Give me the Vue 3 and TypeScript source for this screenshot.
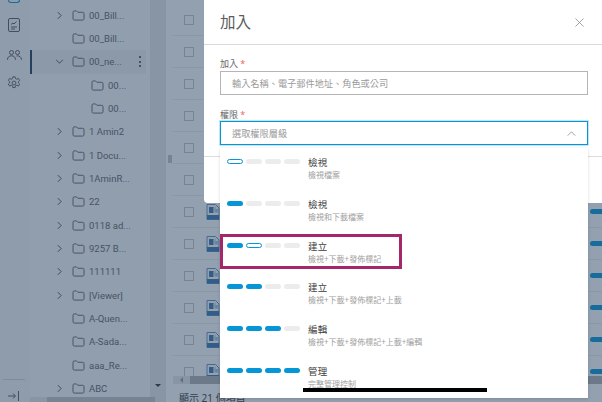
<script setup lang="ts">
interface TreeRow { label: string; caret?: 'right' | 'down'; child?: boolean; selected?: boolean }
const treeRows: TreeRow[] = [
  { label: '00_Bill...', caret: 'right' },
  { label: '00_Bill...' },
  { label: '00_ne...', caret: 'down', selected: true },
  { label: '00...', child: true },
  { label: '00...', child: true },
  { label: '1 Amin2', caret: 'right' },
  { label: '1 Docu...', caret: 'right' },
  { label: '1AminR...', caret: 'right' },
  { label: '22', caret: 'right' },
  { label: '0118 ad...', caret: 'right' },
  { label: '9257 B...', caret: 'right' },
  { label: '111111', caret: 'right' },
  { label: '[Viewer]', caret: 'right' },
  { label: 'A-Quen...' },
  { label: 'A-Sada...' },
  { label: 'aaa_Re...' },
  { label: 'ABC', caret: 'right' }
]
const tableRows = Array.from({ length: 12 }, (_, i) => i)
interface Level { title: string; desc: string; pills: string[] }
const levels: Level[] = [
  { title: '檢視', desc: '檢視檔案', pills: ['half', 'off', 'off', 'off'] },
  { title: '檢視', desc: '檢視和下載檔案', pills: ['on', 'off', 'off', 'off'] },
  { title: '建立', desc: '檢視+下載+發佈標記', pills: ['on', 'half', 'off', 'off'] },
  { title: '建立', desc: '檢視+下載+發佈標記+上載', pills: ['on', 'on', 'off', 'off'] },
  { title: '編輯', desc: '檢視+下載+發佈標記+上載+編輯', pills: ['on', 'on', 'on', 'off'] },
  { title: '管理', desc: '完整管理控制', pills: ['on', 'on', 'on', 'on'] }
]
</script>

<template>
  <div class="page">
    <div class="base">
      <aside class="rail">
        <div class="rail-top"></div>
        <svg class="rail-icon doc" viewBox="0 0 12 14" width="12" height="14" fill="none" stroke="#5c5c5c" stroke-width="1">
          <rect x=".5" y=".5" width="11" height="13" rx="1.500" />
          <path d="M3 6.500 5 5l1 1 2.500-2.500M3 9h6M3 11h4" />
        </svg>
        <svg class="rail-icon people" viewBox="0 0 15 10" width="15" height="10" fill="none" stroke="#5c5c5c" stroke-width="1">
          <circle cx="4.500" cy="2.500" r="2" />
          <circle cx="10.500" cy="2.500" r="2" />
          <path d="M.5 9.800c0-2.800 1.700-4 4-4s4 1.200 4 4M9.600 5.900c2.600-.3 4.900.9 4.900 3.900" />
        </svg>
        <svg class="rail-icon gear" viewBox="0 0 16 16" width="14" height="14" fill="none" stroke="#5c5c5c" stroke-width="1.100">
          <circle cx="8" cy="8" r="2.200" />
          <path d="M6.700 1h2.600l.4 2 1.500.7 1.800-1 1.500 2.300-1.500 1.300v1.600l1.500 1.300-1.500 2.300-1.800-1-1.500.7-.4 2H6.700l-.4-2-1.500-.7-1.800 1-1.500-2.300 1.500-1.300V6.300L1.500 5l1.500-2.300 1.800 1 1.500-.7z" />
        </svg>
        <div class="rail-foot">
          <svg viewBox="0 0 12 10" width="12" height="10" fill="none" stroke="#5c5c5c" stroke-width="1">
            <path d="M0 5h7M5 2.500 7.500 5 5 7.500M10.500 0v10" />
          </svg>
        </div>
      </aside>

      <section class="tree">
        <div class="tree-main">
          <div class="tree-list">
            <div v-for="(row, i) in treeRows" :key="i" class="tree-row" :class="{ child: row.child, selected: row.selected }">
              <span class="caret">
                <svg v-if="row.caret === 'right'" viewBox="0 0 6 10" width="5" height="9" fill="none" stroke="#444" stroke-width="1.100"><path d="m1 1 4 4-4 4" /></svg>
                <svg v-else-if="row.caret === 'down'" viewBox="0 0 10 6" width="9" height="5" fill="none" stroke="#444" stroke-width="1.100"><path d="m1 1 4 4 4-4" /></svg>
              </span>
              <svg class="folder" viewBox="0 0 14 12" width="13" height="11" fill="none" stroke="#5c5c5c" stroke-width="1">
                <path d="M1 2.500A1.500 1.500 0 0 1 2.500 1h2.300l1.500 1.500h5.200A1.500 1.500 0 0 1 13 4v5.500a1.500 1.500 0 0 1-1.500 1.500h-9A1.500 1.500 0 0 1 1 9.500z" />
              </svg>
              <span class="tree-label">{{ row.label }}</span>
              <span v-if="row.selected" class="kebab"><i></i><i></i><i></i></span>
            </div>
          </div>
          <div class="tree-vscroll"><span class="arrow-down"></span></div>
        </div>
        <div class="tree-hscroll"><span class="thumb"></span></div>
      </section>

      <div class="splitter"><span class="grip"></span></div>

      <section class="table">
        <div class="rows">
          <div v-for="r in tableRows" :key="r" class="t-row">
            <span class="check"></span>
            <svg class="file" viewBox="0 0 14 16" width="14" height="16">
              <path d="M1 .5h8.500L13 4v11.500H1z" fill="#fff" stroke="#3f79ad" stroke-width=".8" />
              <rect x="1" y="11" width="12" height="4.500" fill="#3f79ad" />
              <rect x="3" y="3" width="4.500" height="6" fill="#3f79ad" />
              <path d="M8.500 2.500h1V5H12v3.500H8.500z" fill="#a9c5e0" />
            </svg>
            <span class="row-pill"></span>
          </div>
        </div>
        <div class="t-scroll"><span class="t-arrow"></span><span class="t-thumb"></span></div>
        <div class="t-foot">顯示 21 個項目</div>
      </section>
    </div>

    <div class="scrim"></div>

    <div class="modal">
      <header class="modal-head">
        <h1>加入</h1>
        <svg viewBox="0 0 10 10" width="9" height="9" fill="none" stroke="#808080" stroke-width=".8"><path d="m.5.500 9 9M9.500.500l-9 9" /></svg>
      </header>
      <div class="modal-body">
        <label class="lbl">加入 <em>*</em></label>
        <div class="input">輸入名稱、電子郵件地址、角色或公司</div>
        <label class="lbl second">權限 <em>*</em></label>
        <div class="input select">
          <span>選取權限層級</span>
          <svg viewBox="0 0 10 6" width="9" height="5" fill="none" stroke="#808080" stroke-width=".9"><path d="m.5 5.500 4.500-4.500 4.500 4.500" /></svg>
        </div>
      </div>
      <div class="modal-rule"></div>
    </div>

    <div class="menu">
      <div v-for="(lv, i) in levels" :key="i" class="level">
        <div class="pills">
          <span v-for="(p, j) in lv.pills" :key="j" class="pill" :class="p"></span>
        </div>
        <div class="level-text">
          <div class="level-title">{{ lv.title }}</div>
          <div class="level-desc">{{ lv.desc }}</div>
        </div>
      </div>
    </div>

    <div class="highlight"></div>
    <div class="redact"></div>
  </div>
</template>

<style scoped>
.page {
  position: relative;
  width: 602px;
  height: 402px;
  overflow: hidden;
  background: #fff;
  font-family: "Noto Sans", "Noto Sans CJK TC", sans-serif;
}
.base { display: flex; width: 100%; height: 100%; }
.rail {
  width: 30px;
  flex: none;
  display: flex;
  flex-direction: column;
  align-items: center;
  background: #f6f6f6;
  padding-right: 2px;
  box-sizing: border-box;
}
.rail-top { width: 10px; height: 2px; border: 1px solid #0696d7; border-top: 0; border-radius: 0 0 3px 3px; align-self: flex-start; margin-left: 8px; }
.rail-icon { flex: none; }
.doc { margin-top: 15px; }
.people { margin-top: 18px; }
.gear { margin-top: 16px; }
.rail-foot {
  margin-top: auto;
  width: 22px;
  height: 23px;
  border-top: 1px solid #d4d4d4;
  display: flex;
  justify-content: center;
  padding-top: 11px;
  box-sizing: border-box;
}
.tree { width: 136px; flex: none; display: flex; flex-direction: column; background: #fafafa; }
.tree-main { flex: 1; min-height: 0; display: flex; }
.tree-list { width: 120px; flex: none; padding-top: 3.500px; overflow: hidden; box-sizing: border-box; }
.tree-row {
  position: relative;
  height: 23.350px;
  display: flex;
  align-items: center;
  padding-left: 22px;
  color: #666;
  font-family: Roboto, "Noto Sans CJK TC", sans-serif;
  font-size: 9.500px;
  white-space: nowrap;
  box-sizing: border-box;
}
.tree-row.child { padding-left: 41px; }
.tree-row.selected { background: #f0f0f0; width: 115px; margin-left: 1px; padding-left: 21px; }
.tree-row.selected::before {
  content: "";
  position: absolute;
  left: -1px;
  top: 0;
  bottom: 0;
  width: 1.500px;
  background: #243c5a;
}
.caret { width: 15px; flex: none; display: flex; justify-content: center; align-items: center; }
.folder { flex: none; margin-left: 5px; margin-right: 4px; }
.kebab {
  position: absolute;
  right: 5px;
  top: 6px;
  display: flex;
  flex-direction: column;
  gap: 2.500px;
}
.kebab i { width: 2px; height: 2px; border-radius: 50%; background: #333; display: block; }
.tree-vscroll { flex: 1; background: #e8e8e8; position: relative; }
.arrow-down {
  position: absolute;
  left: 5px;
  top: 384px;
  border-left: 3.500px solid transparent;
  border-right: 3.500px solid transparent;
  border-top: 3.500px solid #333;
}
.tree-hscroll { height: 5px; flex: none; background: #e8e8e8; padding-left: 17px; }
.thumb { display: block; width: 108px; height: 100%; background: #c4c4c4; }
.splitter { width: 7px; flex: none; background: #fff; position: relative; }
.grip { position: absolute; left: 2px; top: 155px; width: 4px; height: 8px; background: #c4c4c4; }
.table { flex: 1; min-width: 0; display: flex; flex-direction: column; background: #fff; }
.rows { height: 376px; flex: none; overflow: hidden; padding-top: 4px; box-sizing: border-box; }
.t-row {
  height: 32px;
  display: flex;
  align-items: center;
  padding-left: 11px;
  border-bottom: 1px solid #eee;
  box-sizing: border-box;
}
.check { width: 10px; height: 10px; border: 1px solid #c4c4c4; box-sizing: border-box; flex: none; }
.file { margin-left: 12px; flex: none; }
.row-pill { margin-left: auto; width: 16px; height: 5px; border-radius: 3px; background: #0696d7; margin-right: -4px; }
.t-scroll { height: 8px; flex: none; background: #e8e8e8; display: flex; align-items: center; padding-left: 7px; }
.t-arrow {
  border-top: 3px solid transparent;
  border-bottom: 3px solid transparent;
  border-right: 3px solid #999;
}
.t-thumb { margin-left: 7px; flex: 1; height: 100%; background: #b0b0b0; }
.t-foot { font-size: 10px; line-height: 12px; color: #3c3c3c; padding: 8px 0 0 6px; white-space: nowrap; }
.scrim { position: absolute; inset: 0; background: rgba(40, 66, 98, .5); }
.modal {
  position: absolute;
  left: 204px;
  top: 0;
  width: 398px;
  height: 203px;
  background: #fff;
  border-bottom-left-radius: 4px;
}
.modal-head {
  height: 45px;
  display: flex;
  align-items: center;
  justify-content: space-between;
  padding: 1px 18px 0 16px;
  border-bottom: 1px solid #d9d9d9;
  box-sizing: border-box;
}
.modal-head h1 { margin: -2px 0 0; font-size: 15.500px; font-weight: 400; color: #5c5c5c; }
.modal-body { padding: 11px 14px 0 16px; }
.lbl { display: block; height: 15px; font-size: 9px; line-height: 15px; color: #666; }
.lbl em { color: #ec6a5e; font-style: normal; }
.lbl.second { margin-top: 13px; height: 13px; line-height: 13px; }
.input {
  height: 24px;
  border: 1px solid #b5b5b5;
  padding: 0 11px;
  font-size: 9.200px;
  color: #9a9a9a;
  display: flex;
  align-items: center;
  justify-content: space-between;
  box-sizing: border-box;
  white-space: nowrap;
}
.select { border-color: #0696d7; box-shadow: 0 0 0 1px rgba(6, 150, 215, .25); }
.modal-rule { margin-top: 11px; height: 1px; background: #dcdcdc; }
.menu {
  position: absolute;
  left: 220px;
  top: 148px;
  width: 368px;
  height: 250px;
  background: #fff;
  box-sizing: border-box;
  box-shadow: 0 1px 3px rgba(0, 0, 0, .15);
}
.level { height: 41.800px; display: flex; padding: 11px 0 0 7px; box-sizing: border-box; }
.pills { display: flex; gap: 3px; width: 81px; flex: none; height: 5px; }
.pill { width: 16px; height: 5px; border-radius: 3px; box-sizing: border-box; flex: none; }
.pill.on { background: #0696d7; }
.pill.off { background: #ececec; }
.pill.half { background: #fff; border: 1px solid #0696d7; }
.level-text { margin-top: -2px; }
.level-title { font-size: 9.500px; line-height: 12px; color: #3c3c3c; letter-spacing: .2px; }
.level-desc { font-size: 8px; line-height: 12px; color: #a0a0a0; white-space: nowrap; }
.highlight {
  position: absolute;
  left: 220px;
  top: 234px;
  width: 182px;
  height: 35px;
  border: 3px solid #a5276b;
  box-sizing: border-box;
}
.redact { position: absolute; left: 303px; top: 388px; width: 184px; height: 4px; background: #000; }
</style>
